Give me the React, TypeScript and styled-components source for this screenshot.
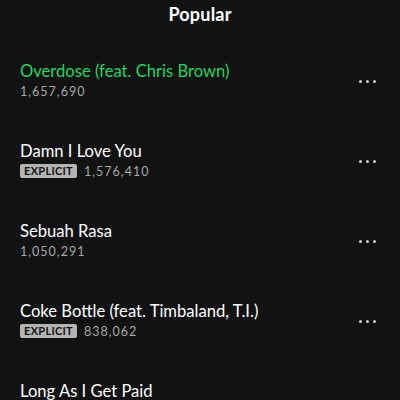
import React from 'react';
import styled, { createGlobalStyle } from 'styled-components';

const GlobalStyle = createGlobalStyle`
	html, body {
		margin: 0;
		padding: 0;
		background: #121212;
	}
	body {
		font-family: 'Lato', 'Noto Sans', sans-serif;
		-webkit-font-smoothing: antialiased;
	}
`;

const Page = styled.div`
	width: 400px;
	height: 400px;
	overflow: hidden;
	background: #121212;
	color: #fff;
`;

const Header = styled.div`
	height: 28px;
	line-height: 28px;
	text-align: center;
	font-size: 18px;
	font-weight: 700;
	letter-spacing: 0.2px;
`;

const List = styled.div`
	padding-top: 13px;
	display: flex;
	flex-direction: column;
`;

const Row = styled.div`
	height: 80px;
	display: flex;
	align-items: center;
	padding: 0 20px;
	gap: 12px;
`;

const Info = styled.div`
	flex: 1;
	min-width: 0;
	display: flex;
	flex-direction: column;
`;

const Title = styled.div<{ $active?: boolean }>`
	font-size: 16.6px;
	line-height: 20px;
	color: ${(p) => (p.$active ? '#1ed760' : '#fff')};
	white-space: nowrap;
	overflow: hidden;
	text-overflow: ellipsis;
`;

const Meta = styled.div`
	display: flex;
	align-items: center;
	gap: 7px;
	height: 20px;
`;

const Plays = styled.span`
	font-size: 12.5px;
	color: #a7a7a7;
	letter-spacing: 1px;
`;

const Explicit = styled.span`
	background: #b3b3b3;
	color: #121212;
	font-size: 11px;
	font-weight: 700;
	line-height: 14px;
	padding: 0 4px;
	border-radius: 2px;
	letter-spacing: 0.3px;
`;

const More = styled.button`
	width: 24px;
	height: 24px;
	padding: 0;
	border: none;
	background: transparent;
	display: flex;
	align-items: center;
	justify-content: center;
	gap: 4px;
	margin-right: 1px;
	& span {
		width: 3px;
		height: 3px;
		border-radius: 50%;
		background: #d0d0d0;
	}
`;

interface Track {
	id: string;
	title: string;
	plays: string;
	explicit?: boolean;
	active?: boolean;
}

const tracks: Track[] = [
	{ id: '1', title: 'Overdose (feat. Chris Brown)', plays: '1,657,690', active: true },
	{ id: '2', title: 'Damn I Love You', plays: '1,576,410', explicit: true },
	{ id: '3', title: 'Sebuah Rasa', plays: '1,050,291' },
	{ id: '4', title: 'Coke Bottle (feat. Timbaland, T.I.)', plays: '838,062', explicit: true },
	{ id: '5', title: 'Long As I Get Paid', plays: '702,114' },
];

const App: React.FC = () => (
	<Page>
		<GlobalStyle />
		<Header>Popular</Header>
		<List>
			{tracks.map((t) => (
				<Row key={t.id}>
					<Info>
						<Title $active={t.active}>{t.title}</Title>
						<Meta>
							{t.explicit && <Explicit>EXPLICIT</Explicit>}
							<Plays>{t.plays}</Plays>
						</Meta>
					</Info>
					<More aria-label="More options">
						<span />
						<span />
						<span />
					</More>
				</Row>
			))}
		</List>
	</Page>
);

export default App;
